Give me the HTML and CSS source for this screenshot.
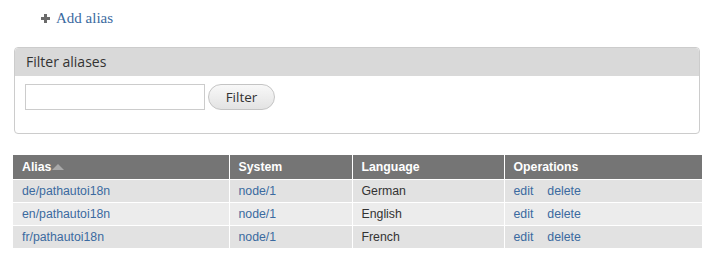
FILE: index.html
```html
<!DOCTYPE html>
<html>
<head>
<meta charset="utf-8">
<link rel="stylesheet" href="styles.css">
</head>
<body>
<ul class="action-links">
  <li><a href="#"><svg class="plus" width="9" height="9" viewBox="0 0 9 9"><rect x="3" y="0" width="3" height="9" fill="#6b6b6b"/><rect x="0" y="3" width="9" height="3" fill="#6b6b6b"/></svg>Add alias</a></li>
</ul>
<fieldset class="filter">
  <div class="legend">Filter aliases</div>
  <div class="filter-body">
    <input class="text" type="text">
    <button class="btn">Filter</button>
  </div>
</fieldset>
<table class="aliases">
  <thead>
    <tr>
      <th class="c1">Alias<span class="arrow"></span></th>
      <th class="c2">System</th>
      <th class="c3">Language</th>
      <th class="c4">Operations</th>
    </tr>
  </thead>
  <tbody>
    <tr class="odd"><td><a href="#">de/pathautoi18n</a></td><td><a href="#">node/1</a></td><td>German</td><td><a href="#" class="op">edit</a><a href="#" class="op">delete</a></td></tr>
    <tr class="even"><td><a href="#">en/pathautoi18n</a></td><td><a href="#">node/1</a></td><td>English</td><td><a href="#" class="op">edit</a><a href="#" class="op">delete</a></td></tr>
    <tr class="odd"><td><a href="#">fr/pathautoi18n</a></td><td><a href="#">node/1</a></td><td>French</td><td><a href="#" class="op">edit</a><a href="#" class="op">delete</a></td></tr>
  </tbody>
</table>
</body>
</html>
```
FILE: styles.css
```css
html, body {
  margin: 0;
  padding: 0;
  background: #fff;
}
body {
  padding: 0 0 0 13px;
  width: 689px;
}
a {
  color: #3b6aa0;
  text-decoration: none;
}
.action-links {
  list-style: none;
  margin: 0;
  padding: 9px 0 0 28px;
  height: 40px;
  box-sizing: border-box;
}
.action-links a {
  font-family: "Liberation Serif", serif;
  font-size: 15px;
  display: inline-flex;
  align-items: center;
  color: #3b6aa0;
}
.plus {
  margin-right: 6px;
}
.filter {
  margin: 7px 0 0 1px;
  padding: 0;
  border: 1px solid #cccccc;
  border-radius: 4px;
  width: 686px;
  height: 87px;
  box-sizing: border-box;
  overflow: hidden;
}
.legend {
  background: #d9d9d9;
  height: 28px;
  padding: 4px 0 0 11px;
  box-sizing: border-box;
  font-family: "Open Sans", sans-serif;
  font-size: 14px;
  color: #333;
}
.filter-body {
  display: flex;
  padding: 8px 0 0 10px;
  gap: 3px;
}
.text {
  width: 180px;
  height: 26px;
  box-sizing: border-box;
  border: 1px solid #cccccc;
  margin: 0;
  padding: 0;
}
.btn {
  width: 67px;
  height: 26px;
  box-sizing: border-box;
  border: 1px solid #c4c4c4;
  border-radius: 13px;
  background: linear-gradient(#f8f8f8, #e3e3e3);
  font-family: "Open Sans", sans-serif;
  font-size: 13.5px;
  color: #333;
  margin: 0;
  padding: 0 0 1px 0;
}
.aliases {
  margin-top: 21px;
  border-collapse: collapse;
  width: 689px;
  font-family: "Liberation Sans", Arial, sans-serif;
  font-size: 12.3px;
}
.aliases th {
  background: #757575;
  color: #fff;
  font-weight: bold;
  text-align: left;
  height: 24px;
  padding: 1px 0 0 9px;
  border-left: 1px solid #fff;
  border-bottom: 1px solid #fff;
  box-sizing: border-box;
}
.aliases th:first-child, .aliases td:first-child {
  border-left: none;
}
.c1 { width: 216px; }
.c2 { width: 123px; }
.c3 { width: 152px; }
.c4 { width: 198px; }
.arrow {
  display: inline-block;
  width: 0;
  height: 0;
  border-left: 6px solid transparent;
  border-right: 6px solid transparent;
  border-bottom: 6px solid #a9a9a9;
  margin-left: 1px;
  vertical-align: 1px;
}
.aliases td {
  height: 23px;
  padding: 0 0 0 9px;
  border-left: 1px solid #fff;
  border-bottom: 1px solid #fff;
  color: #333;
  box-sizing: border-box;
}
.aliases tbody tr:last-child td {
  border-bottom: none;
}
.odd td { background: #e2e2e2; }
.even td { background: #ececec; }
.op {
  margin-right: 14px;
}
```
